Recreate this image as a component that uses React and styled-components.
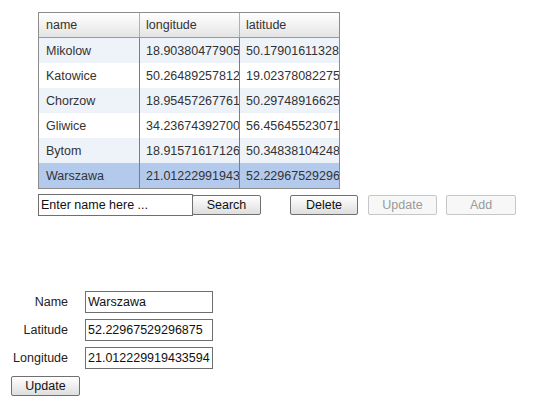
import styled, { createGlobalStyle } from "styled-components";

const rows = [
  ["Mikolow", "18.903804779052734", "50.179016113281250"],
  ["Katowice", "50.264892578125000", "19.023780822753906"],
  ["Chorzow", "18.954572677612305", "50.297489166259766"],
  ["Gliwice", "34.236743927001953", "56.456455230712890"],
  ["Bytom", "18.915716171264648", "50.348381042480470"],
  ["Warszawa", "21.012229919433594", "52.229675292968750"],
];

const GlobalStyle = createGlobalStyle`
  body {
    margin: 0;
    background: #fff;
    font-family: "Liberation Sans", Arial, sans-serif;
    font-size: 12.5px;
    color: #222;
  }
`;

const Page = styled.div`
  width: 533px;
  height: 405px;
`;

const TableBox = styled.div`
  margin: 12px 0 0 38px;
  width: 300px;
  border: 1px solid #8c8c8c;
  overflow: hidden;
`;

const Row = styled.div`
  display: grid;
  grid-template-columns: 100px 100px 100px;
  height: 25px;
  background: ${(p) =>
    p.$selected ? "#b4caec" : p.$odd ? "#eef2f9" : "#ffffff"};
`;

const HeadRow = styled(Row)`
  background: linear-gradient(#ffffff, #e4e4e4);
  border-bottom: 1px solid #9a9a9a;
  height: 24px;
`;

const Cell = styled.div`
  padding-left: ${(p) => (p.$first ? "7px" : "6px")};
  display: flex;
  align-items: center;
  white-space: nowrap;
  overflow: hidden;
  border-left: ${(p) => (p.$first ? "none" : "1px solid #7d7d7d")};
  color: #333;
`;

const HeadCell = styled(Cell)`
  border-left: ${(p) => (p.$first ? "none" : "1px solid #b0b0b0")};
`;

const Controls = styled.div`
  display: flex;
  align-items: center;
  margin: 5px 0 0 38px;
  height: 22px;
`;

const Input = styled.input`
  box-sizing: border-box;
  width: ${(p) => p.$w || "128px"};
  height: 22px;
  border: 1px solid #6f6f6f;
  padding: 0 2px;
  font-family: "Liberation Sans", Arial, sans-serif;
  font-size: 12.5px;
  color: #111;
  outline: none;
  &::placeholder {
    color: #111;
  }
`;

const Button = styled.button`
  box-sizing: border-box;
  width: ${(p) => p.$w || "69px"};
  height: 20px;
  margin-left: ${(p) => p.$ml || "0"};
  padding: 0;
  border: 1px solid ${(p) => (p.disabled ? "#c6c6c6" : "#707070")};
  border-radius: 2px;
  background: ${(p) =>
    p.disabled ? "#f7f7f7" : "linear-gradient(#ffffff, #dedede)"};
  color: ${(p) => (p.disabled ? "#9a9a9a" : "#111")};
  font-family: "Liberation Sans", Arial, sans-serif;
  font-size: 12.5px;
`;

const Form = styled.div`
  margin: 75px 0 0 11px;
  display: grid;
  grid-template-columns: 57px 128px;
  column-gap: 17px;
  row-gap: 6px;
  align-items: center;
`;

const Label = styled.label`
  text-align: right;
  color: #222;
`;

const FormButton = styled(Button)`
  grid-column: 1 / 2;
  margin-top: 1px;
`;

export default function App() {
  return (
    <Page>
      <GlobalStyle />
      <TableBox>
        <HeadRow>
          <HeadCell $first>name</HeadCell>
          <HeadCell>longitude</HeadCell>
          <HeadCell>latitude</HeadCell>
        </HeadRow>
        {rows.map((r, i) => (
          <Row key={r[0]} $odd={i % 2 === 0} $selected={i === 5}>
            <Cell $first>{r[0]}</Cell>
            <Cell>{r[1]}</Cell>
            <Cell>{r[2]}</Cell>
          </Row>
        ))}
      </TableBox>
      <Controls>
        <Input $w="155px" placeholder="Enter name here ..." />
        <Button $ml="-1px">Search</Button>
        <Button $ml="29px" $w="68px">Delete</Button>
        <Button $ml="10px" disabled>Update</Button>
        <Button $ml="9px" $w="70px" disabled>Add</Button>
      </Controls>
      <Form>
        <Label>Name</Label>
        <Input defaultValue="Warszawa" />
        <Label>Latitude</Label>
        <Input defaultValue="52.22967529296875" />
        <Label>Longitude</Label>
        <Input defaultValue="21.012229919433594" />
        <FormButton>Update</FormButton>
      </Form>
    </Page>
  );
}
